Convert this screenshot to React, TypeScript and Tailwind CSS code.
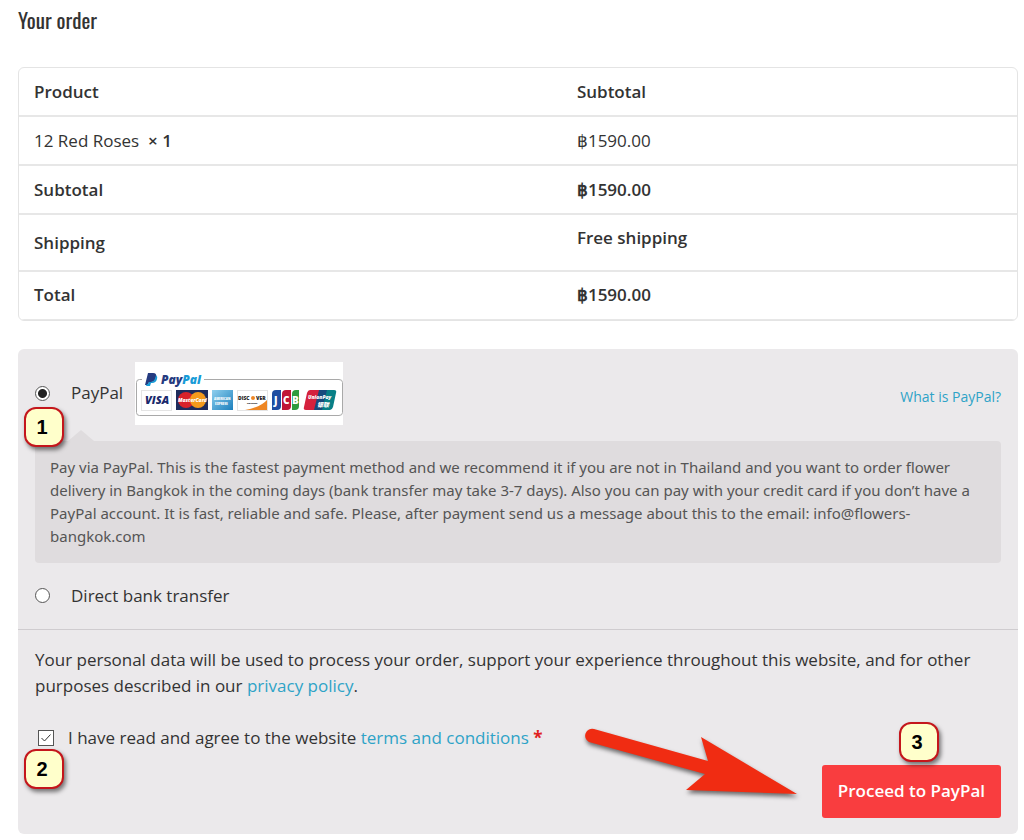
import { useState } from "react";
import type { ReactNode } from "react";

type OrderRow = {
	label: ReactNode;
	value: string;
	strong: boolean;
	tall?: boolean;
};

const rows: OrderRow[] = [
	{
		label: (
			<>
				12 Red Roses&nbsp; <strong className="font-semibold">× 1</strong>
			</>
		),
		value: "฿1590.00",
		strong: false,
	},
	{ label: "Subtotal", value: "฿1590.00", strong: true },
	{ label: "Shipping", value: "Free shipping", strong: true, tall: true },
	{ label: "Total", value: "฿1590.00", strong: true },
];

const radioClass =
	"size-[15px] shrink-0 appearance-none rounded-full border border-[#555] bg-white checked:bg-[radial-gradient(circle,#222_0_4px,#fff_5px)]";

function StepBadge({ step, className }: { step: number; className: string }) {
	return (
		<span
			className={`absolute z-10 flex size-10 items-center justify-center rounded-xl border-2 border-[#c4161c] bg-[#ffffcb] pr-1 font-['Liberation_Sans',sans-serif] text-xl font-bold text-black shadow-[2px_3px_4px_rgba(0,0,0,0.5)] ${className}`}
		>
			{step}
		</span>
	);
}

function PayPalCards() {
	return (
		<svg
			width="208"
			height="63"
			viewBox="0 0 208 63"
			role="img"
			aria-label="PayPal acceptance mark"
			fontFamily="'Open Sans', sans-serif"
			fontWeight="800"
			fontStyle="italic"
		>
			<rect width="208" height="63" fill="#fff" />
			<path
				d="M7 17.500H4.500Q1.500 17.500 1.500 20.500V50.500Q1.500 53.500 4.500 53.500H204Q207.500 53.500 207.500 50.500V20.500Q207.500 17.500 204 17.500H69"
				fill="none"
				stroke="#a9a9a9"
			/>

			{/* PayPal */}
			<path d="M13 11h5q4 0 3 4-1 5-5 5h-2l-1 3h-3z" fill="#253b80" />
			<path d="M21 13q2 2 1 4-1 4-5 4h-1l-1 3h-4l1-2h1l1-2h2q4 0 5-7z" fill="#179bd7" />
			<text x="26" y="22" fontSize="12" fill="#253b80">
				Pay<tspan fill="#179bd7">Pal</tspan>
			</text>

			{/* Visa */}
			<rect x="6.500" y="28.500" width="30" height="20" fill="#fff" stroke="#e4e4e4" />
			<text x="10" y="42" fontSize="11" fill="#1a2a6c">
				VISA
			</text>

			{/* MasterCard */}
			<rect x="41" y="28" width="32" height="20" fill="#1f2c5c" />
			<circle cx="51" cy="38" r="8" fill="#d8222a" />
			<circle cx="63" cy="38" r="8" fill="#f59a1c" />
			<text x="43" y="40" fontSize="5" fill="#fff">
				MasterCard
			</text>

			{/* American Express */}
			<defs>
				<linearGradient id="amex" x1="0" y1="0" x2="1" y2="1">
					<stop offset="0" stopColor="#8fd0ee" />
					<stop offset="1" stopColor="#1c7fbd" />
				</linearGradient>
			</defs>
			<rect x="77" y="28" width="21" height="20" fill="url(#amex)" />
			<g fontSize="3" fill="#fff" fontStyle="normal">
				<text x="79" y="38">
					AMERICAN
				</text>
				<text x="80" y="43">
					EXPRESS
				</text>
			</g>

			{/* Discover */}
			<rect x="102.500" y="28.500" width="30" height="20" fill="#fff" stroke="#e4e4e4" />
			<path d="M132 38v10h-22q16-3 22-10z" fill="#ee8623" />
			<circle cx="118" cy="36" r="2" fill="#ee8623" />
			<g fontStyle="normal" fill="#222">
				<text x="103" y="38" fontSize="5">
					DISC
				</text>
				<text x="121" y="38" fontSize="5">
					VER
				</text>
				<text x="112" y="42" fontSize="2">
					NETWORK
				</text>
			</g>

			{/* JCB */}
			<path d="M141 28h5v16q0 4-4 4h-5V32q0-4 4-4z" fill="#1f4ea1" />
			<path d="M151 28h5v16q0 4-4 4h-5V32q0-4 4-4z" fill="#c01537" />
			<path d="M161 28h3v16q0 4-4 4h-3V32q0-4 4-4z" fill="#2e9b3e" />
			<g fontSize="10" fill="#fff" fontStyle="normal">
				<text x="139" y="42">
					J
				</text>
				<text x="148" y="42">
					C
				</text>
				<text x="157" y="42">
					B
				</text>
			</g>

			{/* UnionPay */}
			<path d="M175 28h12l-5 20h-11q-3 0-2-3l3-14q1-3 3-3z" fill="#d5213d" />
			<path d="M184 28h9l-5 20h-9z" fill="#174a7c" />
			<path d="M192 28h7q3 0 2 3l-3 14q-1 3-3 3h-8z" fill="#087f86" />
			<g fill="#fff">
				<text x="173" y="37" fontSize="5">
					UnionPay
				</text>
				<text
					x="182"
					y="45"
					fontSize="6"
					fontFamily="'Noto Sans CJK SC', sans-serif"
				>
					银联
				</text>
			</g>
		</svg>
	);
}

function PointerArrow() {
	return (
		<svg
			width="230"
			height="90"
			viewBox="0 0 230 90"
			className="pointer-events-none absolute right-[194px] bottom-2 drop-shadow-[1px_3px_2px_rgba(0,0,0,0.55)]"
			aria-hidden="true"
		>
			<path
				d="M17 9L131 41L124 17L220 74L109 70L128 54L12 22A7 7 0 0 1 17 9Z"
				fill="#f02c12"
			/>
		</svg>
	);
}

export default function App() {
	const [method, setMethod] = useState("paypal");
	const [agreed, setAgreed] = useState(true);

	return (
		<main className="bg-white pt-[7px] pr-[6px] pb-[6px] pl-[18px] font-['Open_Sans','Noto_Sans',sans-serif] text-[17px] leading-[26px] text-[#333]">
			<h1 className="mb-[34px] font-['Oswald','Roboto_Condensed',sans-serif] text-[21px] leading-[26px]">
				Your order
			</h1>

			{/* Order review */}
			<div className="overflow-hidden rounded-md border border-[#e4e4e4]">
				<table className="w-full table-fixed border-collapse text-left">
					<thead>
						<tr className="h-12 border-b-2 border-[#e7e7e7]">
							<th scope="col" className="w-[54.4%] px-[15px] font-semibold">
								Product
							</th>
							<th scope="col" className="px-[15px] font-semibold">
								Subtotal
							</th>
						</tr>
					</thead>
					<tbody>
						{rows.map((row, i) => (
							<tr
								key={i}
								className={`border-b-2 border-[#e7e7e7] last:h-12 last:border-b ${row.tall ? "h-[57px]" : "h-[49px]"}`}
							>
								<th
									scope="row"
									className={`px-[15px] ${row.strong ? "font-semibold" : "font-normal"}`}
								>
									{row.label}
								</th>
								<td
									className={`px-[15px] ${row.strong ? "font-semibold" : ""} ${row.tall ? "pb-[10px]" : ""}`}
								>
									{row.value}
								</td>
							</tr>
						))}
					</tbody>
				</table>
			</div>

			{/* Payment */}
			<form
				className="mt-7 rounded-md bg-[#ebe9eb]"
				onSubmit={(e) => e.preventDefault()}
			>
				<div className="border-b border-[#cfcccf] px-[17px] pt-[13px] pb-5">
					<div className="relative flex items-center">
						<input
							id="paypal"
							type="radio"
							name="method"
							className={radioClass}
							checked={method === "paypal"}
							onChange={() => setMethod("paypal")}
						/>
						<label htmlFor="paypal" className="ml-[21px] flex items-center gap-3">
							PayPal
							<PayPalCards />
						</label>
						<a href="#paypal" className="mt-2 ml-auto text-sm text-[#2ea3c7]">
							What is PayPal?
						</a>
						<StepBadge step={1} className="top-[45px] -left-[11px]" />
					</div>

					<div className="relative mt-4 rounded-sm bg-[#dfdcde] p-[15px] font-['Noto_Sans','Open_Sans',sans-serif] text-[15px] leading-[23px] text-[#555]">
						<span className="absolute bottom-full left-[33px] border-x-[13px] border-b-[11px] border-x-transparent border-b-[#dfdcde]" />
						Pay via PayPal. This is the fastest payment method and we recommend
						it if you are not in Thailand and you want to order flower delivery
						in Bangkok in the coming days (bank transfer may take 3-7 days).
						Also you can pay with your credit card if you don’t have a PayPal
						account. It is fast, reliable and safe. Please, after payment send us
						a message about this to the email: info@flowers-bangkok.com
					</div>

					<div className="mt-5 flex items-center">
						<input
							id="bank"
							type="radio"
							name="method"
							className={radioClass}
							checked={method === "bank"}
							onChange={() => setMethod("bank")}
						/>
						<label htmlFor="bank" className="ml-[21px]">
							Direct bank transfer
						</label>
					</div>
				</div>

				<div className="px-[17px] pt-[17px] pb-4">
					<p>
						Your personal data will be used to process your order, support your
						experience throughout this website, and for other purposes described
						in our{" "}
						<a href="#privacy" className="text-[#2ea3c7]">
							privacy policy
						</a>
						.
					</p>

					<div className="relative mt-[26px] flex items-center pl-[3px]">
						<input
							id="terms"
							type="checkbox"
							className="peer size-4 shrink-0 appearance-none border border-[#555] bg-white"
							checked={agreed}
							onChange={(e) => setAgreed(e.target.checked)}
						/>
						<svg
							viewBox="0 0 16 16"
							className="pointer-events-none invisible absolute size-4 peer-checked:visible"
							aria-hidden="true"
						>
							<path d="M3.500 8l3 3 6-6.500" fill="none" stroke="#333" />
						</svg>
						<label htmlFor="terms" className="ml-[14px]">
							I have read and agree to the website{" "}
							<a href="#terms" className="text-[#2ea3c7]">
								terms and conditions
							</a>{" "}
							<span className="font-bold text-[#e02020]">*</span>
						</label>
						<StepBadge step={2} className="top-6 -left-[11px]" />
					</div>

					<div className="relative mt-[14px] flex justify-end">
						<PointerArrow />
						<button
							type="submit"
							className="h-[53px] rounded-[3px] bg-[#f93d3f] px-4 font-semibold text-white"
						>
							Proceed to PayPal
						</button>
						<StepBadge step={3} className="right-[62px] bottom-14" />
					</div>
				</div>
			</form>
		</main>
	);
}
